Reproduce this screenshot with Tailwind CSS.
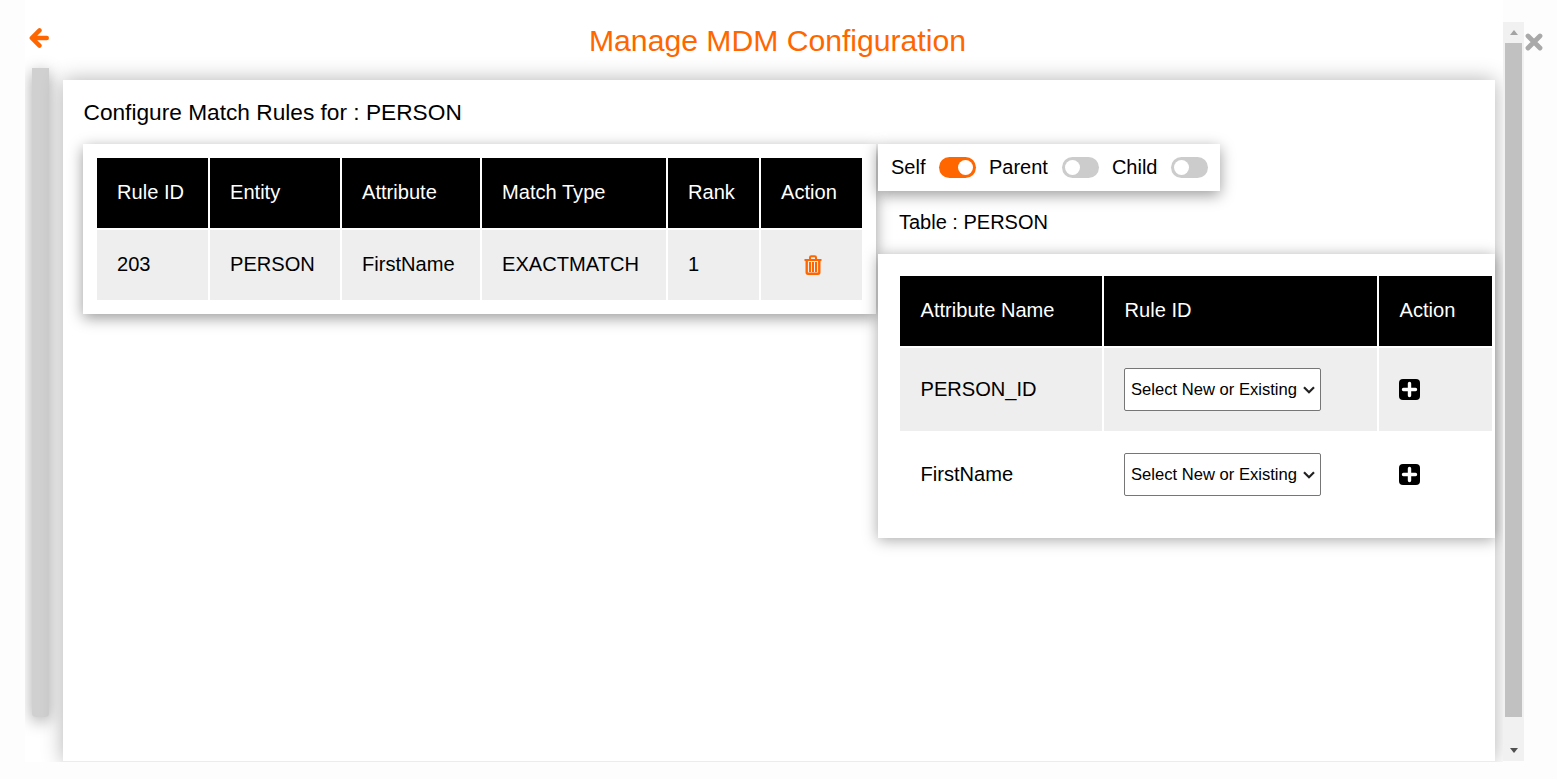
<!DOCTYPE html>
<html lang="en">
<head>
    <meta charset="UTF-8">
    <title>Manage MDM Configuration</title>
    <script src="https://cdn.jsdelivr.net/npm/@tailwindcss/browser@4"></script>
</head>
<body class="bg-[#fdfdfd] text-black font-['Liberation_Sans',Arial,sans-serif] overflow-hidden">
<div class="flex h-[762px] pl-[25px]">

    <!-- Scrolling page area -->
    <div class="w-[1478px] h-full bg-white overflow-hidden flex flex-col">
        <header class="h-[68px] shrink-0 flex items-start">
            <svg class="w-[20px] h-[20px] ml-[4px] mt-[27.500px]" viewBox="0 0 20 20" fill="none" stroke="#ff6600" stroke-width="4.400" stroke-linecap="round" stroke-linejoin="round">
                <path d="M10.500 2.400 2.800 10l7.700 7.600M3.500 10h14.300"/>
            </svg>
            <h1 class="ml-[540px] mt-[24px] text-[30.150px] leading-[34px] text-[#ff6600] whitespace-nowrap">Manage MDM Configuration</h1>
        </header>

        <div class="flex flex-1 min-h-0">
            <div class="w-[38px] shrink-0 pl-[7px]">
                <div class="w-[17px] h-[649px] bg-[#d0d0d0] rounded-b-[4px] shadow-[0_4px_16px_rgba(0,0,0,0.35)]"></div>
            </div>

            <main class="mt-[12px] w-[1432px] h-[682px] shrink-0 bg-white border-b border-[#ececec] shadow-[0_0_20px_rgba(0,0,0,0.3)] pl-[20px]">
                <h2 class="pt-[19px] pl-[0.5px] text-[22.700px] leading-[26px] h-[64px]">Configure Match Rules for : PERSON</h2>

                <div class="flex items-start">
                    <!-- Existing rules -->
                    <section class="w-[793px] h-[170px] shrink-0 bg-white shadow-[0_4px_14px_rgba(0,0,0,0.4)] pl-[12px] pt-[12px]">
                        <table class="table-fixed border-separate border-spacing-[2px] w-[769px] text-[20.100px] text-left">
                            <thead class="bg-black text-white">
                                <tr class="h-[70px]">
                                    <th class="w-[111px] pl-[20px] pb-[2px] font-normal">Rule ID</th>
                                    <th class="w-[130px] pl-[20px] pb-[2px] font-normal">Entity</th>
                                    <th class="w-[138px] pl-[20px] pb-[2px] font-normal">Attribute</th>
                                    <th class="w-[184px] pl-[20px] pb-[2px] font-normal">Match Type</th>
                                    <th class="w-[91px] pl-[20px] pb-[2px] font-normal">Rank</th>
                                    <th class="w-[101px] pl-[20px] pb-[2px] font-normal">Action</th>
                                </tr>
                            </thead>
                            <tbody class="bg-[#eeeeee]">
                                <tr class="h-[70px]">
                                    <td class="pl-[20px] pb-[2px]">203</td>
                                    <td class="pl-[20px] pb-[2px]">PERSON</td>
                                    <td class="pl-[20px] pb-[2px]">FirstName</td>
                                    <td class="pl-[20px] pb-[2px]">EXACTMATCH</td>
                                    <td class="pl-[20px] pb-[2px]">1</td>
                                    <td class="pl-[43px]">
                                        <svg class="w-[18px] h-[20px]" viewBox="0 0 18 20" fill="none" stroke="#ff6600">
                                            <path stroke-width="2" d="M.5 5h17M6 4.500V2.600C6 1.800 6.500 1.200 7.200 1.200h3.600c.7 0 1.200.6 1.200 1.400V4.500"/>
                                            <path stroke-width="2.400" d="M2.700 5v12.300c0 .9.500 1.500 1.300 1.500h10c.8 0 1.300-.6 1.300-1.500V5"/>
                                            <path stroke-width="2" d="M6 7v10M9 7v10M12 7v10"/>
                                        </svg>
                                    </td>
                                </tr>
                            </tbody>
                        </table>
                    </section>

                    <div class="ml-[2px] w-[617px] shrink-0">
                        <!-- Relation toggles -->
                        <div class="w-[342px] h-[47px] bg-white shadow-[0_4px_14px_rgba(0,0,0,0.4)] flex items-center pl-[13px] text-[20px]">
                            <span class="pb-[2px]">Self</span>
                            <span class="ml-[14px] w-[37px] h-[21px] rounded-full bg-[#ff6600] flex items-center justify-end pr-[3px]"><span class="w-[15px] h-[15px] rounded-full bg-white"></span></span>
                            <span class="ml-[12.500px] pb-[2px]">Parent</span>
                            <span class="ml-[14px] w-[37px] h-[21px] rounded-full bg-[#cccccc] flex items-center pl-[3px]"><span class="w-[15px] h-[15px] rounded-full bg-white"></span></span>
                            <span class="ml-[13px] pb-[2px]">Child</span>
                            <span class="ml-[13.500px] w-[37px] h-[21px] rounded-full bg-[#cccccc] flex items-center pl-[3px]"><span class="w-[15px] h-[15px] rounded-full bg-white"></span></span>
                        </div>

                        <p class="pl-[21px] h-[63px] pt-[19px] text-[20px] leading-[24px]">Table : PERSON</p>

                        <!-- Attributes -->
                        <section class="h-[284px] bg-white shadow-[0_2px_14px_rgba(0,0,0,0.35)] pl-[20px] pt-[20px]">
                            <table class="table-fixed border-separate border-spacing-[2px] w-[596px] text-[20.100px] text-left">
                                <thead class="bg-black text-white">
                                    <tr class="h-[70px]">
                                        <th class="w-[202px] pl-[20.500px] pb-[2px] font-normal">Attribute Name</th>
                                        <th class="w-[273px] pl-[20.500px] pb-[2px] font-normal">Rule ID</th>
                                        <th class="w-[113px] pl-[20.500px] pb-[2px] font-normal">Action</th>
                                    </tr>
                                </thead>
                                <tbody>
                                    <tr class="h-[83px] bg-[#eeeeee]">
                                        <td class="pl-[20.500px]">PERSON_ID</td>
                                        <td class="pl-[20px]">
                                            <div class="relative w-[197px]">
                                                <select class="block appearance-none w-[197px] h-[43px] pl-[6px] pt-[1px] bg-white border border-[#767676] rounded-[2px] text-[16.600px] text-black">
                                                    <option>Select New or Existing</option>
                                                </select>
                                                <svg class="absolute right-[6px] top-[18px] w-[12px] h-[8px] pointer-events-none" viewBox="0 0 12 8" fill="none" stroke="#222" stroke-width="2.200"><path d="M1 1.300 6 6.300l5-5"/></svg>
                                            </div>
                                        </td>
                                        <td class="pl-[20px]">
                                            <svg class="w-[21px] h-[21px]" viewBox="0 0 21 21"><rect width="21" height="21" rx="4" fill="#000"/><path d="M10.500 4.500v12M4.500 10.500h12" stroke="#fff" stroke-width="3.400" stroke-linecap="round"/></svg>
                                        </td>
                                    </tr>
                                    <tr class="h-[83px]">
                                        <td class="pl-[20.500px]">FirstName</td>
                                        <td class="pl-[20px]">
                                            <div class="relative w-[197px]">
                                                <select class="block appearance-none w-[197px] h-[43px] pl-[6px] pt-[1px] bg-white border border-[#767676] rounded-[2px] text-[16.600px] text-black">
                                                    <option>Select New or Existing</option>
                                                </select>
                                                <svg class="absolute right-[6px] top-[18px] w-[12px] h-[8px] pointer-events-none" viewBox="0 0 12 8" fill="none" stroke="#222" stroke-width="2.200"><path d="M1 1.300 6 6.300l5-5"/></svg>
                                            </div>
                                        </td>
                                        <td class="pl-[20px]">
                                            <svg class="w-[21px] h-[21px]" viewBox="0 0 21 21"><rect width="21" height="21" rx="4" fill="#000"/><path d="M10.500 4.500v12M4.500 10.500h12" stroke="#fff" stroke-width="3.400" stroke-linecap="round"/></svg>
                                        </td>
                                    </tr>
                                </tbody>
                            </table>
                        </section>
                    </div>
                </div>
            </main>
        </div>
    </div>

    <!-- Page scrollbar -->
    <div class="w-[21px] h-[739px] mt-[22px] shrink-0 bg-[#f1f1f1] flex flex-col items-center">
        <div class="h-[21px] w-full flex items-center justify-center">
            <span class="w-0 h-0 border-x-[4px] border-x-transparent border-b-[5px] border-b-[#a3a3a3]"></span>
        </div>
        <div class="w-[17px] h-[674px] bg-[#c1c1c1]"></div>
        <div class="flex-1 w-full flex items-center justify-center pt-[22px]">
            <span class="w-0 h-0 border-x-[4px] border-x-transparent border-t-[5px] border-t-[#505050]"></span>
        </div>
    </div>

    <svg class="w-[18px] h-[18px] ml-[1px] mt-[33px]" viewBox="0 0 18 18" fill="none" stroke="#a9a9a9" stroke-width="4.800" stroke-linecap="round">
        <path d="M3 3l12 12M15 3 3 15"/>
    </svg>
</div>
</body>
</html>
